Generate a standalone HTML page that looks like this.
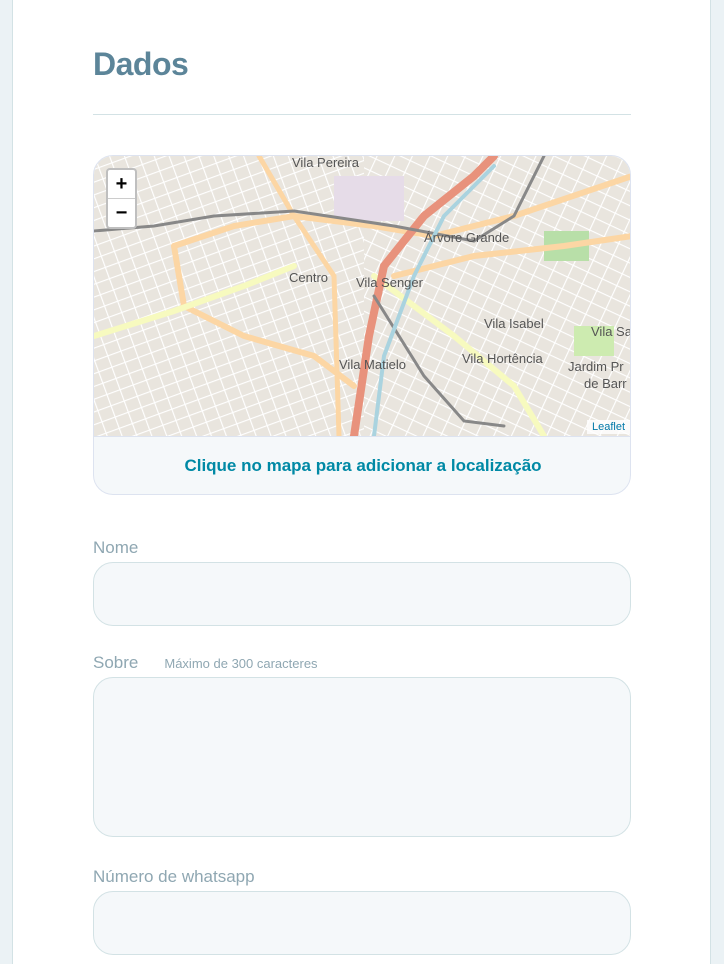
<!DOCTYPE html>
<html><head><meta charset="utf-8"><style>
*{box-sizing:border-box;margin:0;padding:0}
body{width:724px;height:964px;overflow:hidden;background:#ebf2f5;font-family:"Liberation Sans",sans-serif}
.card{position:absolute;left:12px;top:0;width:699px;height:964px;background:#fff;border-left:1px solid #d3e2e5;border-right:1px solid #d3e2e5}
h1{position:absolute;left:93px;top:46px;font-size:32px;color:#5c8599;font-weight:bold;letter-spacing:-0.5px}
.hr{position:absolute;left:93px;top:114px;width:538px;height:1px;background:#d3e2e5}
.map{position:absolute;left:93px;top:155px;width:538px;height:340px;border:1px solid #dde3f0;border-radius:20px;overflow:hidden;background:#f5f8fa}
.tiles{position:absolute;left:0;top:0;width:538px;height:280px;background:#e9e5de}
.foot{position:absolute;left:0;top:280px;width:538px;height:59px;border-top:1px solid #dde3f0;text-align:center;line-height:58px;color:#0089a5;font-weight:bold;font-size:17px}
.zoom{position:absolute;left:12px;top:12px;width:31px;height:61px;background:#fff;border:2px solid rgba(0,0,0,.25);border-radius:4px;font-size:20px;text-align:center}
.zoom div{height:29px;line-height:28px;font-weight:bold}
.lf{position:absolute;right:0;top:264px;background:rgba(255,255,255,.8);font-size:11px;color:#0078a8;padding:1px 5px}
label{position:absolute;left:93px;font-size:17px;color:#8fa7b2}
label span{font-size:13px;margin-left:26px}
.in{position:absolute;left:93px;width:538px;background:#f5f8fa;border:1px solid #d3e2e5;border-radius:20px}
</style></head><body>
<div class="card"></div>
<h1>Dados</h1>
<div class="hr"></div>
<div class="map">
<div class="tiles">
<svg width="538" height="280" viewBox="0 0 538 280">
<defs><pattern id="g" width="14" height="12" patternUnits="userSpaceOnUse" patternTransform="rotate(-20)"><path d="M0 0.5H14M0.5 0V12" stroke="#fff" stroke-width="1.3"/></pattern>
<pattern id="g2" width="16" height="13" patternUnits="userSpaceOnUse" patternTransform="rotate(25)"><path d="M0 0.5H16M0.5 0V13" stroke="#fff" stroke-width="1.3"/></pattern></defs>
<rect width="270" height="280" fill="url(#g)"/>
<rect x="270" width="268" height="280" fill="url(#g2)"/>
<rect x="240" y="20" width="70" height="45" fill="#e6dce8"/>
<rect x="450" y="75" width="45" height="30" fill="#b8dfa8"/>
<rect x="480" y="170" width="40" height="30" fill="#cdebb0"/>
<g fill="none" stroke-linecap="round">
<path d="M80 90L140 70L200 60L280 70L340 80L420 60L538 20" stroke="#fcd6a4" stroke-width="6"/>
<path d="M80 90L90 150L150 180L220 200L260 230" stroke="#fcd6a4" stroke-width="6"/>
<path d="M165 0L200 60L220 90L240 120L245 280" stroke="#fcd6a4" stroke-width="5"/>
<path d="M0 180L80 155L150 130L200 110" stroke="#f7fabf" stroke-width="6"/>
<path d="M300 120L380 100L470 90L538 80" stroke="#fcd6a4" stroke-width="6"/>
<path d="M280 120L360 180L420 230L450 280" stroke="#f7fabf" stroke-width="6"/>
<path d="M260 280L275 180L290 110L330 60L380 20L400 0" stroke="#e8927c" stroke-width="8"/>
<path d="M0 75L60 70L120 60L200 55L300 70L380 85" stroke="#888" stroke-width="3"/>
<path d="M280 140L330 220L370 265L410 270" stroke="#888" stroke-width="3"/>
<path d="M380 85L420 60L450 0" stroke="#888" stroke-width="3"/>
<path d="M280 280L290 200L320 120L350 60L400 10" stroke="#aad3df" stroke-width="4"/>
</g>
<g font-family="Liberation Sans,sans-serif" font-size="13" fill="#555">
<text x="198" y="11">Vila Pereira</text><text x="330" y="86">Árvore Grande</text>
<text x="195" y="126">Centro</text><text x="262" y="131">Vila Senger</text>
<text x="390" y="172">Vila Isabel</text><text x="368" y="207">Vila Hortência</text>
<text x="245" y="213">Vila Matielo</text><text x="474" y="215">Jardim Pr</text><text x="490" y="232">de Barr</text>
<text x="497" y="180">Vila Sa</text>
</g>
</svg>
</div>
<div class="zoom"><div style="border-bottom:1px solid #ccc">+</div><div>−</div></div>
<div class="lf">Leaflet</div>
<div class="foot">Clique no mapa para adicionar a localização</div>
</div>
<label style="top:538px">Nome</label>
<div class="in" style="top:562px;height:64px"></div>
<label style="top:653px">Sobre<span>Máximo de 300 caracteres</span></label>
<div class="in" style="top:677px;height:160px"></div>
<label style="top:867px">Número de whatsapp</label>
<div class="in" style="top:891px;height:64px"></div>
</body></html>
